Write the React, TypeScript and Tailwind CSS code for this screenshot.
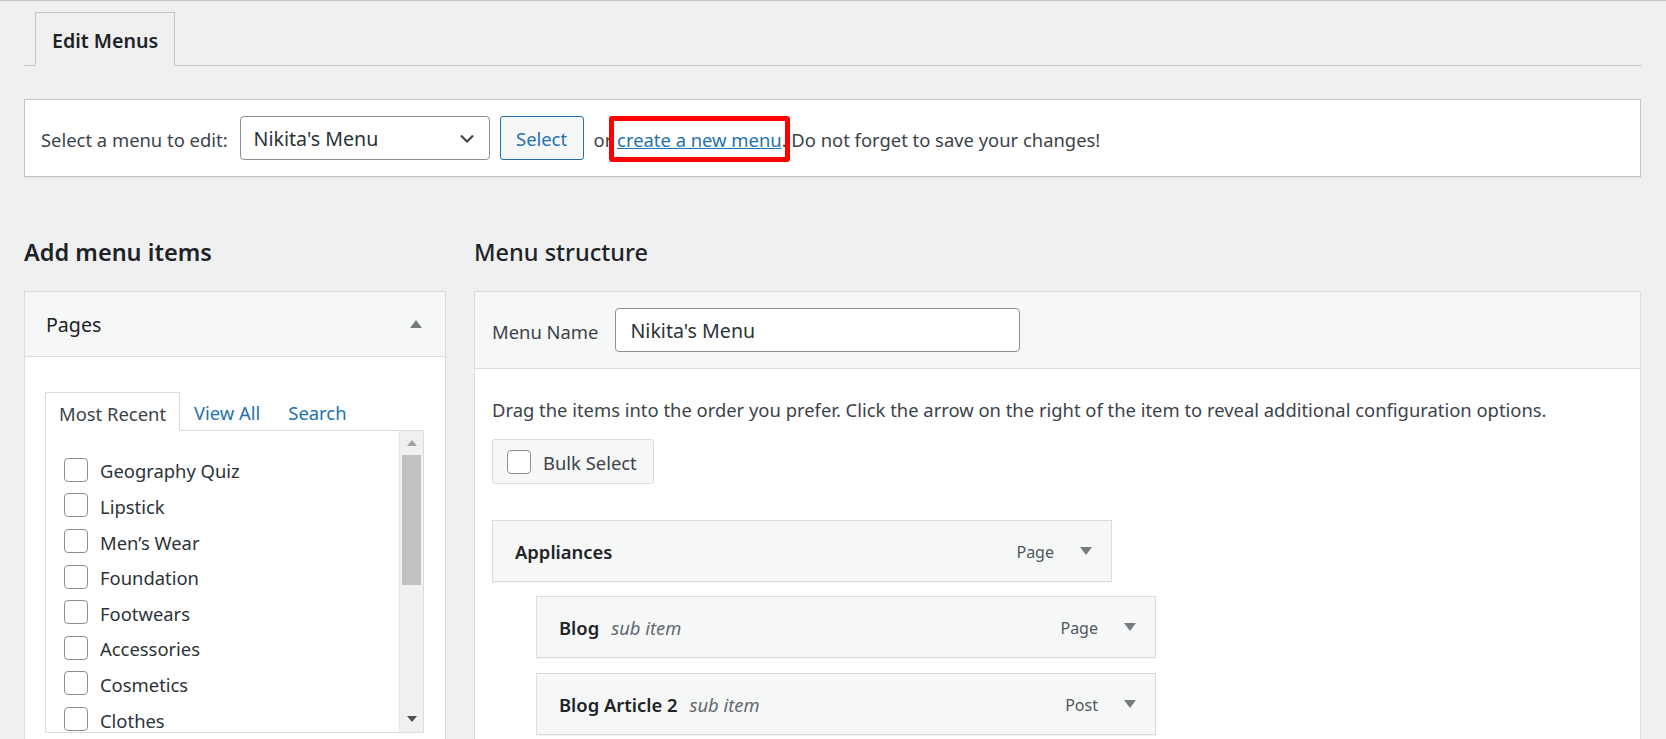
import React from 'react';

const pages = ['Geography Quiz', 'Lipstick', 'Men’s Wear', 'Foundation', 'Footwears', 'Accessories', 'Cosmetics', 'Clothes'];

const menuItems = [
  { title: 'Appliances', type: 'Page', sub: false },
  { title: 'Blog', type: 'Page', sub: true },
  { title: 'Blog Article 2', type: 'Post', sub: true },
];

const Checkbox = () => (
  <span className="block w-6 h-6 shrink-0 rounded-[4px] border border-[#8c8f94] bg-white" />
);

const TriangleDown = ({ color = '#787c82' }: { color?: string }) => (
  <svg width="12" height="8" viewBox="0 0 12 8">
    <path d="M0 0h12L6 8z" fill={color} />
  </svg>
);

const TriangleUp = ({ color = '#787c82' }: { color?: string }) => (
  <svg width="12" height="8" viewBox="0 0 12 8">
    <path d="M0 8h12L6 0z" fill={color} />
  </svg>
);

const App: React.FC = () => {
  return (
    <div className="h-[739px] overflow-hidden bg-[#f0f0f1] border-t border-[#c3c4c7] font-['Noto_Sans',sans-serif] text-[18.4px] text-[#3c434a]">
      <div className="pl-6 pr-[25px]">
        {/* tabs */}
        <div className="pt-[11px] pl-[11px] flex border-b border-[#c3c4c7]">
          <div className="h-[54px] -mb-px px-4 pt-[3px] flex items-center border border-[#c3c4c7] border-b-[#f0f0f1] bg-[#f0f0f1] text-[19.6px] font-semibold text-[#1d2327]">
            Edit Menus
          </div>
        </div>

        {/* select menu bar */}
        <div className="mt-[33px] h-[78px] flex items-center px-4 bg-white border border-[#c3c4c7] shadow-[0_1px_1px_rgba(0,0,0,0.04)]">
          <span className="pt-[3px]">Select a menu to edit:</span>
          <div className="ml-3 w-[250px] h-[44px] flex items-center justify-between pl-[13px] pr-[12px] pt-[2px] rounded-[4px] border border-[#8c8f94] bg-white text-[19.6px] text-[#2c3338]">
            <span>Nikita's Menu</span>
            <svg width="20" height="20" viewBox="0 0 20 20">
              <path d="M5 6l5 5 5-5 2 1-7 7-7-7 2-1z" fill="#3c434a" />
            </svg>
          </div>
          <button className="ml-[10px] w-[84px] h-[44px] pt-[2px] rounded-[3px] border border-[#2271b1] bg-[#f6f7f7] text-[#2271b1]">
            Select
          </button>
          <span className="ml-[10px] pt-[3px]">
            or{' '}
            <span className="relative">
              <a href="#" className="text-[#2271b1] underline">create a new menu</a>
              <span className="absolute -left-[8px] -right-[8px] -top-[11px] -bottom-[10px] border-[5px] border-[#ff0000] rounded-[3px]" />
            </span>
            . Do not forget to save your changes!
          </span>
        </div>

        <div className="mt-[60px] flex gap-[28px]">
          {/* left column */}
          <div className="w-[422px] shrink-0">
            <h2 className="h-[30px] leading-[30px] text-[23.5px] font-semibold text-[#1d2327]">Add menu items</h2>
            <div className="mt-[24px] h-[500px] border border-[#dcdcde] bg-white">
              <div className="h-[65px] flex items-center justify-between pl-[21px] pr-[23px] bg-[#f6f7f7] border-b border-[#dcdcde]">
                <span className="pt-[2px] text-[19.6px] text-[#1d2327]">Pages</span>
                <TriangleUp />
              </div>
              <div className="pt-[35px] pl-[20px] pr-[21px]">
                <div className="flex h-[39px] -mb-px relative z-10">
                  <div className="px-[13px] pt-[3px] flex items-center border-t border-l border-r border-[#dcdcde] bg-white text-[#3c434a]">
                    Most Recent
                  </div>
                  <a href="#" className="px-[14px] pt-[3px] flex items-center text-[#2271b1]">View All</a>
                  <a href="#" className="px-[14px] pt-[3px] flex items-center text-[#2271b1]">Search</a>
                </div>
                <div className="h-[303px] flex border border-[#dcdcde] bg-white">
                  <ul className="flex-1 pt-[21px] pl-[18px]">
                    {pages.map((p) => (
                      <li key={p} className="h-[35.6px] flex items-center gap-3 text-[#2c3338]">
                        <Checkbox />
                        <span className="pt-[3px]">{p}</span>
                      </li>
                    ))}
                  </ul>
                  <div className="w-[24px] flex flex-col bg-[#f0f0f0] border-l border-[#e6e6e6]">
                    <div className="h-[24px] flex items-center justify-center">
                      <svg width="10" height="6" viewBox="0 0 10 6"><path d="M0 6h10L5 0z" fill="#a3a3a3" /></svg>
                    </div>
                    <div className="mx-[2px] h-[130px] bg-[#c1c1c1]" />
                    <div className="flex-1" />
                    <div className="h-[26px] flex items-center justify-center">
                      <svg width="10" height="6" viewBox="0 0 10 6"><path d="M0 0h10L5 6z" fill="#505050" /></svg>
                    </div>
                  </div>
                </div>
              </div>
            </div>
          </div>

          {/* right column */}
          <div className="flex-1">
            <h2 className="h-[30px] leading-[30px] text-[23.5px] font-medium text-[#1d2327]">Menu structure</h2>
            <div className="mt-[24px] h-[500px] border border-[#dcdcde] bg-white">
              <div className="h-[77px] flex items-center pl-[17px] bg-[#f6f7f7] border-b border-[#dcdcde]">
                <span className="pt-[3px]">Menu Name</span>
                <div className="ml-[17px] w-[405px] h-[44px] flex items-center pl-[14px] pt-[2px] rounded-[4px] border border-[#8c8f94] bg-white text-[19.6px] text-[#2c3338]">
                  Nikita's Menu
                </div>
              </div>
              <div className="px-[17px] pt-[27px]">
                <p className="leading-[27px]">
                  Drag the items into the order you prefer. Click the arrow on the right of the item to reveal additional configuration options.
                </p>
                <div className="mt-[16px] h-[45px] inline-flex items-center gap-3 pl-[14px] pr-[16px] rounded-[3px] border border-[#dcdcde] bg-[#f6f7f7]">
                  <Checkbox />
                  <span className="pt-[3px]">Bulk Select</span>
                </div>
                <ul className="mt-[36px]">
                  {menuItems.map((m, i) => (
                    <li
                      key={m.title}
                      className={`w-[620px] h-[62px] flex items-center justify-between pl-[22px] pr-[19px] border border-[#dcdcde] bg-[#f6f7f7] shadow-[0_1px_1px_rgba(0,0,0,0.04)] ${m.sub ? 'ml-[44px]' : ''} ${i === 1 ? 'mt-[14px]' : ''} ${i === 2 ? 'mt-[15px]' : ''}`}
                    >
                      <span className="pt-[2px]">
                        <span className="font-semibold text-[#1d2327]">{m.title}</span>
                        {m.sub && <span className="ml-3 italic text-[#646970]">sub item</span>}
                      </span>
                      <span className="flex items-center gap-[26px]">
                        <span className="pt-[2px] text-[16px] text-[#50575e]">{m.type}</span>
                        <TriangleDown />
                      </span>
                    </li>
                  ))}
                </ul>
              </div>
            </div>
          </div>
        </div>
      </div>
    </div>
  );
};

export default App;
